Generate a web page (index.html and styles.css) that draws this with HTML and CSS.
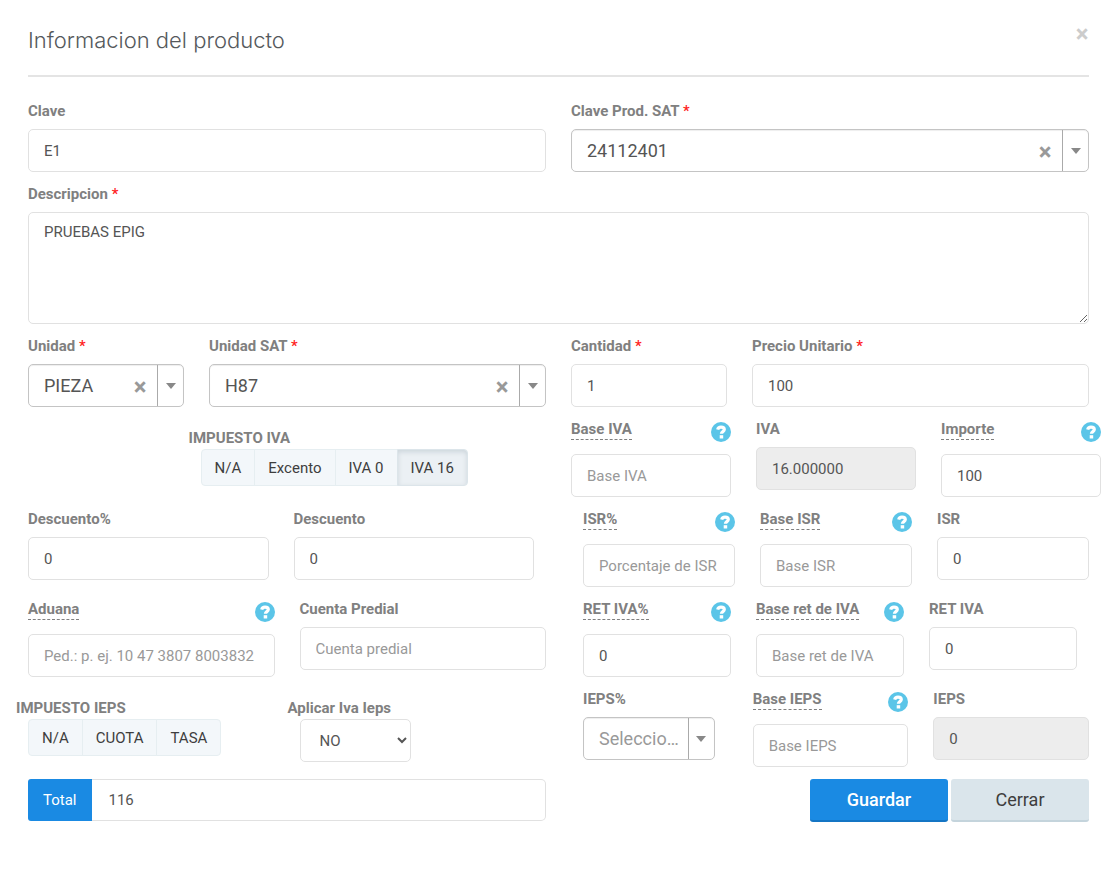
FILE: index.html
```html
<!DOCTYPE html>
<html lang="es">
<head>
<meta charset="utf-8">
<meta name="viewport" content="width=device-width, initial-scale=1">
<title>Informacion del producto</title>
<link rel="stylesheet" href="styles.css">
</head>
<body>
<svg class="symbols" aria-hidden="true">
  <symbol id="help" viewBox="0 0 20 20">
    <circle cx="10" cy="10" r="10" fill="#5bc5e8"/>
    <path d="M6.7 7.6C7.1 5.7 8.3 5.1 10 5.1c2 0 3.3 1 3.3 2.5 0 2.1-2.9 2-2.9 4.2" fill="none" stroke="#fff" stroke-width="3.2"/>
    <path d="M8.7 13.2h3.5v3.3H8.7z" fill="#fff"/>
  </symbol>
</svg>
<main class="dialog">
  <header class="dialog-header">
    <h1 class="title">Informacion del producto</h1>
    <button class="close" type="button" aria-label="Cerrar ventana">×</button>
  </header>

  <form class="form">
    <div class="row halves">
      <div class="field">
        <label for="clave">Clave</label>
        <input class="control" id="clave" type="text" value="E1">
      </div>
      <div class="field">
        <label for="clave-sat">Clave Prod. SAT <span class="required">*</span></label>
        <div class="combo">
          <select id="clave-sat"><option>24112401</option></select>
          <button class="clear" type="button" aria-label="Quitar">×</button>
          <button class="toggle" type="button" aria-label="Abrir"></button>
        </div>
      </div>
    </div>

    <div class="field">
      <label for="descripcion">Descripcion <span class="required">*</span></label>
      <textarea class="control area" id="descripcion">PRUEBAS EPIG</textarea>
    </div>

    <div class="row twelfths">
      <div class="field narrow">
        <label for="unidad">Unidad <span class="required">*</span></label>
        <div class="combo">
          <select id="unidad"><option>PIEZA</option></select>
          <button class="clear" type="button" aria-label="Quitar">×</button>
          <button class="toggle" type="button" aria-label="Abrir"></button>
        </div>
      </div>
      <div class="field wide">
        <label for="unidad-sat">Unidad SAT <span class="required">*</span></label>
        <div class="combo">
          <select id="unidad-sat"><option>H87</option></select>
          <button class="clear" type="button" aria-label="Quitar">×</button>
          <button class="toggle" type="button" aria-label="Abrir"></button>
        </div>
      </div>
      <div class="field narrow">
        <label for="cantidad">Cantidad <span class="required">*</span></label>
        <input class="control" id="cantidad" type="text" value="1">
      </div>
      <div class="field wide">
        <label for="precio">Precio Unitario <span class="required">*</span></label>
        <input class="control" id="precio" type="text" value="100">
      </div>
    </div>

    <div class="row halves">
      <div class="choice choice-iva" role="group" aria-labelledby="impuesto-iva">
        <span class="caption" id="impuesto-iva">IMPUESTO IVA</span>
        <div class="segments">
          <button type="button">N/A</button>
          <button type="button">Excento</button>
          <button type="button">IVA 0</button>
          <button class="active" type="button" aria-pressed="true">IVA 16</button>
        </div>
      </div>
      <div class="row thirds bleed">
        <div class="field">
          <div class="label-line"><label class="hint" for="base-iva">Base IVA</label><svg class="help"><use href="#help"/></svg></div>
          <input class="control" id="base-iva" type="text" placeholder="Base IVA">
        </div>
        <div class="field">
          <label for="iva">IVA</label>
          <input class="control" id="iva" type="text" value="16.000000" readonly>
        </div>
        <div class="field">
          <div class="label-line"><label class="hint" for="importe">Importe</label><svg class="help"><use href="#help"/></svg></div>
          <input class="control" id="importe" type="text" value="100">
        </div>
      </div>
    </div>

    <div class="row halves">
      <div class="row halves inset-right">
        <div class="field">
          <label for="descuento-pct">Descuento%</label>
          <input class="control" id="descuento-pct" type="text" value="0">
        </div>
        <div class="field">
          <label for="descuento">Descuento</label>
          <input class="control" id="descuento" type="text" value="0">
        </div>
      </div>
      <div class="row thirds inset-left">
        <div class="field">
          <div class="label-line"><label class="hint" for="isr-pct">ISR%</label><svg class="help"><use href="#help"/></svg></div>
          <input class="control" id="isr-pct" type="text" placeholder="Porcentaje de ISR">
        </div>
        <div class="field">
          <div class="label-line"><label class="hint" for="base-isr">Base ISR</label><svg class="help"><use href="#help"/></svg></div>
          <input class="control" id="base-isr" type="text" placeholder="Base ISR">
        </div>
        <div class="field">
          <label for="isr">ISR</label>
          <input class="control" id="isr" type="text" value="0">
        </div>
      </div>
    </div>

    <div class="row halves">
      <div class="row halves">
        <div class="field">
          <div class="label-line"><label class="hint" for="aduana">Aduana</label><svg class="help"><use href="#help"/></svg></div>
          <input class="control" id="aduana" type="text" placeholder="Ped.: p. ej. 10 47 3807 8003832">
        </div>
        <div class="field">
          <label for="predial">Cuenta Predial</label>
          <input class="control" id="predial" type="text" placeholder="Cuenta predial">
        </div>
      </div>
      <div class="row thirds inset-left inset-right">
        <div class="field">
          <div class="label-line"><label class="hint" for="ret-pct">RET IVA%</label><svg class="help"><use href="#help"/></svg></div>
          <input class="control" id="ret-pct" type="text" value="0">
        </div>
        <div class="field">
          <div class="label-line"><label class="hint" for="base-ret">Base ret de IVA</label><svg class="help"><use href="#help"/></svg></div>
          <input class="control" id="base-ret" type="text" placeholder="Base ret de IVA">
        </div>
        <div class="field">
          <label for="ret">RET IVA</label>
          <input class="control" id="ret" type="text" value="0">
        </div>
      </div>
    </div>

    <div class="row halves">
      <div class="row halves outdent">
        <div class="choice" role="group" aria-labelledby="impuesto-ieps">
          <span class="caption" id="impuesto-ieps">IMPUESTO IEPS</span>
          <div class="segments">
            <button type="button">N/A</button>
            <button type="button">CUOTA</button>
            <button type="button">TASA</button>
          </div>
        </div>
        <div class="choice">
          <label class="caption" for="aplicar">Aplicar Iva Ieps</label>
          <select class="control apply" id="aplicar"><option>NO</option><option>SI</option></select>
        </div>
      </div>
      <div class="row ieps inset-left">
        <div class="field short">
          <label for="ieps-pct">IEPS%</label>
          <div class="combo empty">
            <select id="ieps-pct"><option>Seleccionar</option></select>
            <button class="toggle" type="button" aria-label="Abrir"></button>
          </div>
        </div>
        <div class="field">
          <div class="label-line"><label class="hint" for="base-ieps">Base IEPS</label><svg class="help"><use href="#help"/></svg></div>
          <input class="control" id="base-ieps" type="text" placeholder="Base IEPS">
        </div>
        <div class="field">
          <label for="ieps">IEPS</label>
          <input class="control" id="ieps" type="text" value="0" readonly>
        </div>
      </div>
    </div>

    <div class="row halves">
      <div class="total">
        <label class="addon" for="total">Total</label>
        <input class="control" id="total" type="text" value="116">
      </div>
      <div class="actions">
        <button class="action save" type="button">Guardar</button>
        <button class="action cancel" type="button">Cerrar</button>
      </div>
    </div>
  </form>
</main>
</body>
</html>
```
FILE: styles.css
```css
*, *::before, *::after {
  box-sizing: border-box;
}

body {
  margin: 0;
  background: #fff;
  color: #555;
  font: 15px/20px Roboto, "Liberation Sans", sans-serif;
}

button, input, select, textarea {
  margin: 0;
  font: inherit;
  color: inherit;
}

.symbols {
  display: none;
}

.dialog {
  padding: 24px 23px 56px 28px;
}

.dialog-header {
  display: flex;
  justify-content: space-between;
  align-items: flex-start;
  height: 53px;
  border-bottom: 2px solid #e4e4e4;
}

.title {
  margin: 0;
  font: 300 22px/32px Inter, Roboto, sans-serif;
  color: #55595c;
}

.close,
.clear {
  border: 0;
  padding: 0;
  background: none;
  font-weight: 700;
  cursor: pointer;
}

.close {
  width: 14px;
  font-size: 24px;
  line-height: 20px;
  color: #ccc;
}

.form {
  display: flex;
  flex-direction: column;
  gap: 12px;
  padding-top: 24px;
}

.row {
  display: grid;
  gap: 25px;
  align-items: start;
}

.halves {
  grid-template-columns: repeat(2, minmax(0, 1fr));
}

.thirds {
  grid-template-columns: repeat(3, minmax(0, 1fr));
}

.ieps {
  grid-template-columns: minmax(0, 144fr) repeat(2, minmax(0, 155fr));
}

.twelfths {
  grid-template-columns: repeat(12, minmax(0, 1fr));
}

.narrow {
  grid-column: span 2;
}

.wide {
  grid-column: span 4;
}

.inset-left {
  padding-left: 12px;
}

.inset-right {
  padding-right: 12px;
}

.bleed {
  margin-right: -12px;
}

.outdent {
  margin-left: -12px;
  margin-right: 12px;
}

.field {
  display: flex;
  flex-direction: column;
  gap: 8px;
}

label,
.caption {
  font-weight: 700;
  color: #808080;
}

.required {
  font-weight: 500;
  color: #f22;
}

.label-line {
  display: flex;
  justify-content: space-between;
  align-items: flex-start;
  height: 27px;
}

.hint {
  height: 21px;
  border-bottom: 1px dashed #808080;
  white-space: nowrap;
}

.help {
  flex: none;
  width: 20px;
  height: 20px;
  margin-top: 3px;
}

.control {
  width: 100%;
  height: 43px;
  padding: 0 15px;
  border: 1px solid #e1e1e1;
  border-radius: 5px;
  background: #fff;
}

.control[readonly] {
  background: #ededed;
}

.control::placeholder {
  color: #999;
  opacity: 1;
}

.area {
  display: block;
  height: 112px;
  padding-top: 9px;
  resize: vertical;
}

.combo {
  display: flex;
  height: 43px;
  border: 1px solid #c4c4c4;
  border-radius: 5px;
  font-size: 18px;
  box-shadow: inset 0 1px 1px #eee;
}

.combo select {
  flex: 1;
  min-width: 0;
  padding: 0 0 0 15px;
  border: 0;
  background: none;
  appearance: none;
  text-overflow: ellipsis;
}

.clear {
  width: 34px;
  padding-top: 3px;
  font-size: 24px;
  color: #999;
}

.toggle {
  display: flex;
  justify-content: center;
  align-items: center;
  width: 26px;
  padding: 0;
  border: 0;
  border-left: 1px solid #aaa;
  background: none;
}

.toggle::before {
  content: "";
  border: 5px solid transparent;
  border-top: 6px solid #888;
  border-bottom: 0;
}

.empty {
  color: #999;
}

.short .combo {
  margin-right: 13px;
}

.empty select {
  margin-right: 8px;
}

.choice {
  padding-top: 9px;
}

.choice-iva {
  margin-left: 31%;
}

.caption {
  display: block;
  margin-bottom: 1px;
}

.segments {
  display: flex;
  margin-left: 12px;
}

.segments button {
  height: 37px;
  padding: 0 13px;
  border: 1px solid #e6eef1;
  background: #f3f7fa;
  color: #3e3e3e;
}

.segments button + button {
  margin-left: -1px;
}

.segments button:first-child {
  border-radius: 4px 0 0 4px;
}

.segments button:last-child {
  border-radius: 0 4px 4px 0;
}

.segments .active {
  border-color: #dce5ea;
  background: #ebf0f4;
  box-shadow: inset 0 2px 5px #ccd5db;
}

.apply {
  width: 111px;
  margin-left: 12px;
}

.total {
  display: flex;
}

.addon {
  padding: 11px 15px;
  border-radius: 3px 0 0 3px;
  background: #1a8ae3;
  color: #fff;
  font-weight: 400;
}

.total .control {
  flex: 1;
  height: 42px;
  border-left: 0;
  border-radius: 0 5px 5px 0;
  padding-left: 17px;
}

.actions {
  display: flex;
  justify-content: flex-end;
  gap: 3px;
}

.action {
  width: 138px;
  height: 43px;
  border: 0;
  border-bottom: 2px solid;
  border-radius: 3px;
  font-size: 18px;
}

.save {
  border-color: #1475c4;
  background: #1a8ae3;
  color: #fff;
  font-weight: 500;
}

.cancel {
  border-color: #c4d4dc;
  background: #dae5eb;
  color: #3e3e3e;
}
```
